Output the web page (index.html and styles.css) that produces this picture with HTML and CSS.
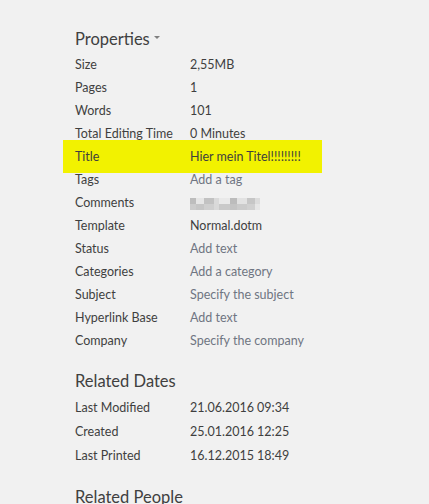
FILE: index.html
```html
<!DOCTYPE html>
<html lang="en">
<head>
<meta charset="utf-8">
<title>Properties</title>
<link rel="stylesheet" href="styles.css">
</head>
<body>
<main class="panel">
  <h2 class="heading">Properties<span class="caret"></span></h2>
  <dl class="props">
    <div class="row"><dt>Size</dt><dd>2,55MB</dd></div>
    <div class="row"><dt>Pages</dt><dd>1</dd></div>
    <div class="row"><dt>Words</dt><dd>101</dd></div>
    <div class="row"><dt>Total Editing Time</dt><dd>0 Minutes</dd></div>
    <div class="row marked"><dt>Title</dt><dd>Hier mein Titel!!!!!!!!!</dd></div>
    <div class="row"><dt>Tags</dt><dd class="hint">Add a tag</dd></div>
    <div class="row"><dt>Comments</dt><dd><span class="masked"><i></i><i></i><i></i><i></i><i></i><i></i><i></i><i></i><i></i></span></dd></div>
    <div class="row"><dt>Template</dt><dd>Normal.dotm</dd></div>
    <div class="row"><dt>Status</dt><dd class="hint">Add text</dd></div>
    <div class="row"><dt>Categories</dt><dd class="hint">Add a category</dd></div>
    <div class="row"><dt>Subject</dt><dd class="hint">Specify the subject</dd></div>
    <div class="row"><dt>Hyperlink Base</dt><dd class="hint">Add text</dd></div>
    <div class="row"><dt>Company</dt><dd class="hint">Specify the company</dd></div>
  </dl>

  <h2 class="heading section">Related Dates</h2>
  <dl class="props dates">
    <div class="row"><dt>Last Modified</dt><dd>21.06.2016 09:34</dd></div>
    <div class="row"><dt>Created</dt><dd>25.01.2016 12:25</dd></div>
    <div class="row"><dt>Last Printed</dt><dd>16.12.2015 18:49</dd></div>
  </dl>

  <h2 class="heading section people">Related People</h2>
</main>
</body>
</html>
```

FILE: styles.css
```css
html, body {
  margin: 0;
  background: #f1f1f1;
}

body {
  font-family: "Lato", "Open Sans", sans-serif;
  color: #3f3f3f;
}

.panel {
  padding: 27px 0 0 75px;
}

.heading {
  margin: 0 0 2px 0;
  height: 24px;
  line-height: 24px;
  font-size: 16.5px;
  font-weight: 400;
  color: #404040;
  display: flex;
  align-items: center;
}

.heading.section {
  margin-top: 17px;
}

.heading.people {
  margin-top: 18px;
}

.caret {
  width: 0;
  height: 0;
  margin-left: 4px;
  margin-top: -3px;
  border-left: 3px solid transparent;
  border-right: 3px solid transparent;
  border-top: 3px solid #808080;
}

.props {
  margin: 0;
}

.row {
  display: grid;
  grid-template-columns: 115px auto;
  height: 23px;
  align-items: center;
  font-size: 12.5px;
  position: relative;
}

.dates .row {
  height: 24px;
}

.row dt,
.row dd {
  margin: 0;
  white-space: nowrap;
  position: relative;
}

.row dd {
  color: #3f3f3f;
}

.row dd.hint {
  color: #6f7582;
}

/* yellow marker drawn behind the Title row */
.row.marked::before {
  content: "";
  position: absolute;
  left: -12px;
  width: 259px;
  top: -5px;
  bottom: -5px;
  background: #f2f200;
}

/* pixelated, unreadable comment text */
.masked {
  display: flex;
  align-items: center;
  height: 12px;
  margin-top: 3px;
}

.masked i {
  display: block;
  width: 8px;
  height: 12px;
  background: #c8c8c8;
}

.masked i:nth-child(1) { background: linear-gradient(#bdbdbd 50%, #cccccc 50%); width: 6px; }
.masked i:nth-child(2) { background: linear-gradient(#e6e6e6 50%, #c6c6c6 50%); }
.masked i:nth-child(3) { background: linear-gradient(#c2c2c2 50%, #cfcfcf 50%); width: 10px; }
.masked i:nth-child(4) { background: linear-gradient(#dadada 50%, #d9d9d9 50%); width: 5px; }
.masked i:nth-child(5) { background: linear-gradient(#e9e9e9 50%, #c9c9c9 50%); width: 11px; }
.masked i:nth-child(6) { background: linear-gradient(#bcbcbc 50%, #c4c4c4 50%); width: 7px; }
.masked i:nth-child(7) { background: linear-gradient(#e2e2e2 50%, #cbcbcb 50%); width: 10px; }
.masked i:nth-child(8) { background: linear-gradient(#c6c6c6 50%, #d0d0d0 50%); width: 8px; }
.masked i:nth-child(9) { background: linear-gradient(#dcdcdc 50%, #e6e6e6 50%); width: 5px; }
```
